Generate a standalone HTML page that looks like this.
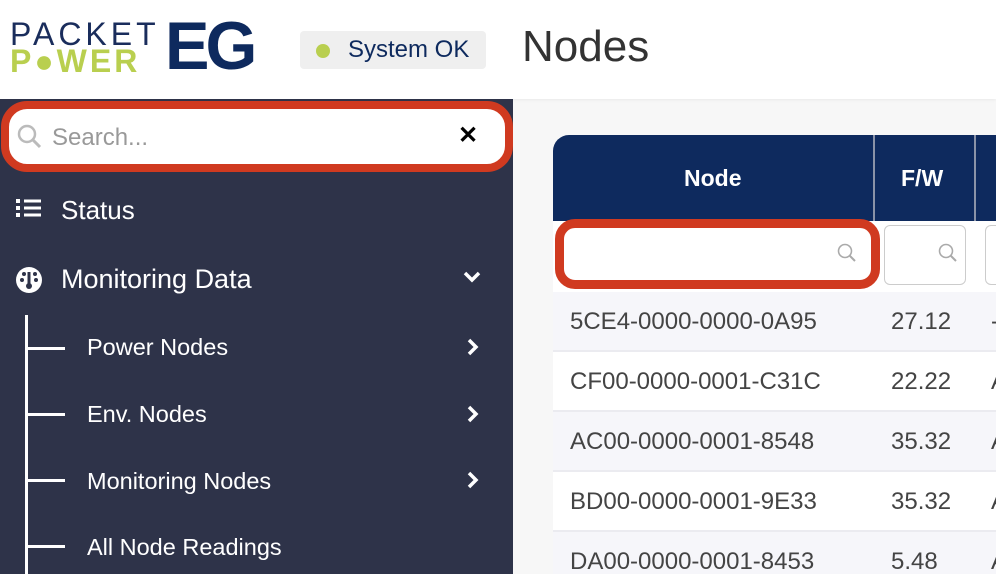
<!DOCTYPE html>
<html><head><style>
*{margin:0;padding:0;box-sizing:border-box}
html,body{width:996px;height:574px;overflow:hidden}
body{background:#f7f7f7;font-family:"Liberation Sans",sans-serif;position:relative}
.hdr{position:absolute;left:0;top:0;width:996px;height:99px;background:#fff;box-shadow:0 1px 3px rgba(0,0,0,.06)}
.side{position:absolute;left:0;top:99px;width:513px;height:475px;background:#2e3349}
.abs{position:absolute}
.w{color:#fff}
.row{position:absolute;left:553px;width:443px;height:60px;border-bottom:2px solid #ebebf0;font-size:24px;color:#444}
.row span{position:absolute;top:16px;white-space:nowrap}
.sub{font-size:23.5px;white-space:nowrap}
</style></head><body>
<div class="hdr">
 <div class="abs" style="left:10px;top:16px;font-size:32px;color:#1a2d5c;letter-spacing:4px;font-weight:300">PACKET</div>
 <div class="abs" style="left:10px;top:43px;font-size:32px;color:#b9cf4f;font-weight:bold;letter-spacing:3px">P<span style="color:#b9cf4f">●</span>WER</div>
 <div class="abs" style="left:165px;top:14px;font-size:68px;line-height:64px;color:#0e2a5e;font-weight:bold;letter-spacing:-4px;transform:scaleX(0.98);transform-origin:left">EG</div>
 <div class="abs" style="left:300px;top:31px;width:186px;height:38px;background:#efefef;border-radius:4px"></div>
 <div class="abs" style="left:316px;top:44px;width:14px;height:14px;border-radius:50%;background:#b9cf4f"></div>
 <div class="abs" style="left:348px;top:36px;font-size:24px;color:#0e2a5e">System OK</div>
 <div class="abs" style="left:522px;top:22px;font-size:44px;color:#333">Nodes</div>
</div>
<div class="side">
 <div class="abs" style="left:1px;top:2px;width:512px;height:71px;border:8px solid #d03a20;border-radius:26px;background:#fff"></div>
 <svg class="abs" style="left:17px;top:25px" width="26" height="26" viewBox="0 0 26 26"><circle cx="10" cy="10" r="8" fill="none" stroke="#bbb" stroke-width="2.5"/><line x1="16" y1="16" x2="23" y2="23" stroke="#bbb" stroke-width="3"/></svg>
 <div class="abs" style="left:52px;top:25px;font-size:24px;color:#999">Search...</div>
 <div class="abs" style="left:458px;top:22px;font-size:24px;font-weight:bold;color:#000">✕</div>
 <svg class="abs" style="left:16px;top:99px" width="26" height="22"><g fill="#fff"><rect x="0" y="1" width="4" height="4"/><rect x="0" y="8" width="4" height="4"/><rect x="0" y="15" width="4" height="4"/><rect x="8" y="1.5" width="17" height="3"/><rect x="8" y="8.5" width="17" height="3"/><rect x="8" y="15.5" width="17" height="3"/></g></svg>
 <div class="abs w" style="left:61px;top:96px;font-size:26px">Status</div>
 <svg class="abs" style="left:15px;top:167px" width="28" height="28" viewBox="0 0 28 28"><circle cx="14" cy="14" r="13" fill="#fff"/><g fill="#2e3349"><circle cx="7" cy="14" r="2"/><circle cx="9" cy="8" r="2"/><circle cx="20" cy="8" r="2"/><circle cx="21" cy="14" r="2"/><rect x="12.5" y="6" width="3" height="13"/><circle cx="14" cy="20" r="3"/></g></svg>
 <div class="abs w" style="left:61px;top:165px;font-size:27px;white-space:nowrap">Monitoring Data</div>
 <svg class="abs" style="left:462px;top:171px" width="20" height="14"><polyline points="3,3 10,10 17,3" fill="none" stroke="#fff" stroke-width="3.5"/></svg>
 <div class="abs" style="left:25px;top:216px;width:3px;height:260px;background:#fff"></div>
 <div class="abs" style="left:26px;top:248px;width:39px;height:3px;background:#fff"></div>
 <div class="abs" style="left:26px;top:314px;width:39px;height:3px;background:#fff"></div>
 <div class="abs" style="left:26px;top:380px;width:39px;height:3px;background:#fff"></div>
 <div class="abs" style="left:26px;top:446px;width:39px;height:3px;background:#fff"></div>
 <div class="abs w sub" style="left:87px;top:235px">Power Nodes</div>
 <div class="abs w sub" style="left:87px;top:302px">Env. Nodes</div>
 <div class="abs w sub" style="left:87px;top:369px">Monitoring Nodes</div>
 <div class="abs w sub" style="left:87px;top:435px">All Node Readings</div>
 <svg class="abs" style="left:466px;top:238px" width="14" height="20"><polyline points="3,3 10,10 3,17" fill="none" stroke="#fff" stroke-width="3.5"/></svg>
 <svg class="abs" style="left:466px;top:305px" width="14" height="20"><polyline points="3,3 10,10 3,17" fill="none" stroke="#fff" stroke-width="3.5"/></svg>
 <svg class="abs" style="left:466px;top:371px" width="14" height="20"><polyline points="3,3 10,10 3,17" fill="none" stroke="#fff" stroke-width="3.5"/></svg>
</div>
<div class="abs" style="left:553px;top:135px;width:443px;height:86px;background:#0e2a5e;border-top-left-radius:16px"></div>
<div class="abs" style="left:873px;top:135px;width:2px;height:86px;background:#8a93a8"></div>
<div class="abs" style="left:974px;top:135px;width:2px;height:86px;background:#8a93a8"></div>
<div class="abs w" style="left:684px;top:165px;font-size:23px;font-weight:bold">Node</div>
<div class="abs w" style="left:901px;top:165px;font-size:23px;font-weight:bold">F/W</div>
<div class="abs" style="left:553px;top:221px;width:443px;height:71px;background:#fff"></div>
<div class="abs" style="left:555px;top:219px;width:325px;height:70px;border:9px solid #d03a20;border-radius:20px;background:#fff"></div>
<div class="abs" style="left:884px;top:225px;width:82px;height:60px;border:1px solid #ccc;border-radius:6px"></div>
<div class="abs" style="left:985px;top:225px;width:30px;height:60px;border:1px solid #ccc;border-radius:6px"></div>
<svg class="abs" style="left:836px;top:242px" width="22" height="22"><circle cx="9" cy="9" r="6.5" fill="none" stroke="#aaa" stroke-width="1.6"/><line x1="14" y1="14" x2="19" y2="19" stroke="#aaa" stroke-width="2"/></svg>
<svg class="abs" style="left:937px;top:242px" width="22" height="22"><circle cx="9" cy="9" r="6.5" fill="none" stroke="#aaa" stroke-width="1.6"/><line x1="14" y1="14" x2="19" y2="19" stroke="#aaa" stroke-width="2"/></svg>
<div class="row" style="top:292px;background:#f6f6fa"><span style="left:17px">5CE4-0000-0000-0A95</span><span style="left:338px">27.12</span><span style="left:438px">-</span></div>
<div class="row" style="top:352px;background:#fff"><span style="left:17px">CF00-0000-0001-C31C</span><span style="left:338px">22.22</span><span style="left:438px">A</span></div>
<div class="row" style="top:412px;background:#f6f6fa"><span style="left:17px">AC00-0000-0001-8548</span><span style="left:338px">35.32</span><span style="left:438px">A</span></div>
<div class="row" style="top:472px;background:#fff"><span style="left:17px">BD00-0000-0001-9E33</span><span style="left:338px">35.32</span><span style="left:438px">A</span></div>
<div class="row" style="top:532px;background:#f6f6fa"><span style="left:17px">DA00-0000-0001-8453</span><span style="left:338px">5.48</span><span style="left:438px">A</span></div>
</body></html>
